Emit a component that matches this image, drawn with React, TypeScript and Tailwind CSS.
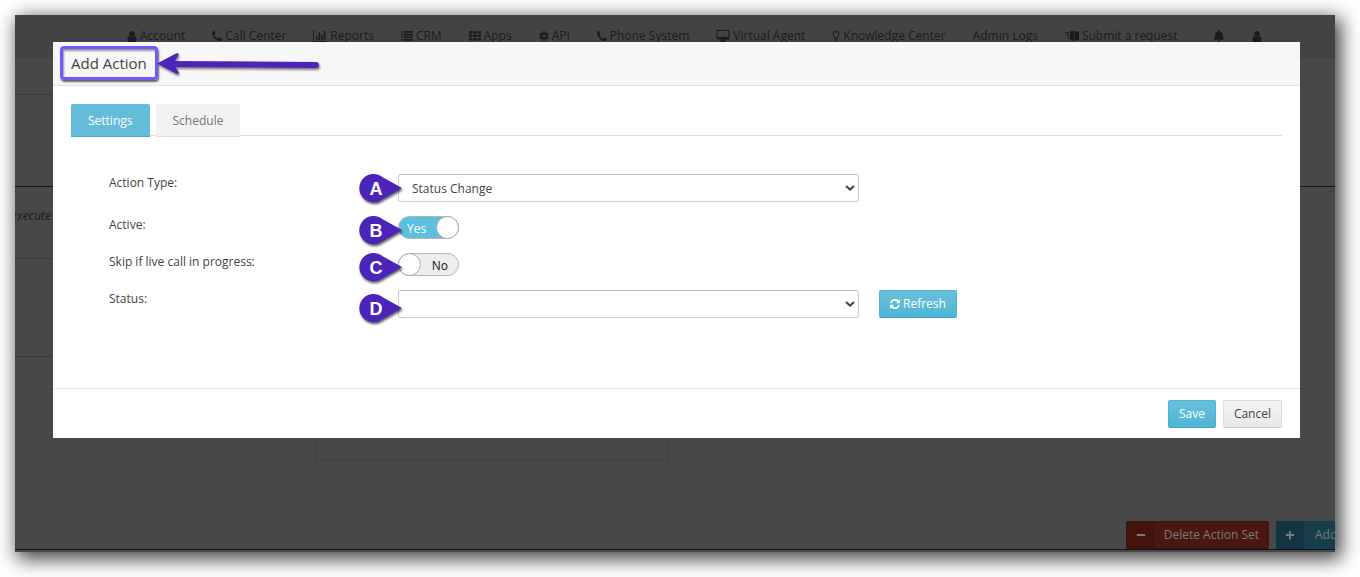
import React, { useState } from 'react'
import { FaCog, FaBell, FaMinus, FaPlus } from 'react-icons/fa'
import { clsx } from 'clsx'

interface IconProps {
  className?: string
}

const UserIcon: React.FC<IconProps> = ({ className }) => (
  <svg viewBox="0 0 1280 1536" fill="currentColor" className={className} aria-hidden="true">
    <path d="M1280 1271q0 109-62.5 187t-150.5 78h-854q-88 0-150.5-78t-62.5-187q0-85 8.5-160.5t31.5-152 58.5-131 94-89 134.5-34.5q131 128 313 128t313-128q76 0 134.5 34.5t94 89 58.5 131 31.5 152 8.5 160.5zm-256-887q0 159-112.5 271.5t-271.5 112.5-271.5-112.5-112.5-271.5 112.5-271.5 271.5-112.5 271.5 112.5 112.5 271.5z" />
  </svg>
)

const PhoneIcon: React.FC<IconProps> = ({ className }) => (
  <svg viewBox="0 128 1408 1408" fill="currentColor" className={className} aria-hidden="true">
    <path d="M1408 1240q0 27-10 70.5t-21 68.5q-21 50-122 106-94 51-186 51-27 0-53-3.5t-57.5-12.5-47-14.5-55.5-20.5-49-18q-98-35-175-83-127-79-264-216t-216-264q-48-77-83-175-3-9-18-49t-20.5-55.5-14.5-47-12.5-57.5-3.5-53q0-92 51-186 56-101 106-122 25-11 68.5-21t70.5-10q14 0 21 3 18 6 53 76 11 19 30 54t35 63.5 31 53.5q3 4 17.5 25t21.5 35.5 7 28.5q0 20-28.5 50t-62 55-62 53-28.5 46q0 9 5 22.5t8.5 20.5 14 24 11.5 19q76 137 174 235t235 174q2 1 19 11.5t24 14 20.5 8.5 22.5 5q18 0 46-28.5t53-62 55-62 50-28.5q14 0 28.5 7t35.5 21.5 25 17.5q25 15 53.5 31t63.5 35 54 30q70 35 76 53 3 7 3 21z" />
  </svg>
)

const RefreshIcon: React.FC<IconProps> = ({ className }) => (
  <svg viewBox="0 0 1536 1536" fill="currentColor" className={className} aria-hidden="true">
    <path d="M1511 928q0 5-1 7-64 268-268 434.5t-478 166.5q-146 0-282.5-55t-243.5-157l-129 129q-19 19-45 19t-45-19-19-45v-448q0-26 19-45t45-19h448q26 0 45 19t19 45-19 45l-137 137q71 66 161 102t187 36q134 0 250-65t186-179q11-17 53-117 8-23 30-23h192q13 0 22.5 9.5t9.5 22.5zm25-800v448q0 26-19 45t-45 19h-448q-26 0-45-19t-19-45 19-45l138-138q-148-137-349-137-134 0-250 65t-186 179q-11 17-53 117-8 23-30 23h-199q-13 0-22.5-9.5t-9.5-22.5v-7q65-268 270-434.5t480-166.5q146 0 284 55.5t245 156.5l130-129q19-19 45-19t45 19 19 45z" />
  </svg>
)

const ListIcon: React.FC<IconProps> = ({ className }) => (
  <svg viewBox="0 0 12 12" fill="currentColor" className={className} aria-hidden="true">
    <path d="M0 1h1.600v1.700H0zM2.500 1H12v1.700H2.500zM0 3.700h1.600v1.700H0zM2.500 3.700H12v1.700H2.500zM0 6.400h1.600v1.700H0zM2.500 6.400H12v1.700H2.500zM0 9.100h1.600v1.700H0zM2.500 9.100H12v1.700H2.500z" />
  </svg>
)

const GridIcon: React.FC<IconProps> = ({ className }) => (
  <svg viewBox="0 0 12 12" fill="currentColor" className={className} aria-hidden="true">
    <path d="M0 1h3.400v2.600H0zM4.300 1h3.400v2.600H4.300zM8.600 1H12v2.600H8.600zM0 4.500h3.400v2.600H0zM4.300 4.500h3.400v2.600H4.300zM8.600 4.500H12v2.600H8.600zM0 8h3.400v2.600H0zM4.300 8h3.400v2.600H4.300zM8.600 8H12v2.600H8.600z" />
  </svg>
)

const ChartIcon: React.FC<IconProps> = ({ className }) => (
  <svg viewBox="0 0 14 12" fill="currentColor" className={className} aria-hidden="true">
    <path d="M0 0h1v11h13v1H0zM3 6h1.600v4H3zM5.600 2.500h1.600V10H5.600zM8.200 4.500h1.600V10H8.200zM10.800 1h1.700v9h-1.700z" />
  </svg>
)

const DesktopIcon: React.FC<IconProps> = ({ className }) => (
  <svg viewBox="0 0 13 12" fill="currentColor" className={className} aria-hidden="true">
    <path fillRule="evenodd" d="M1 0h11a1 1 0 0 1 1 1v7.500a1 1 0 0 1-1 1H8.500l.5 1.500h.5v.7h-6V11H4l.5-1.500H1a1 1 0 0 1-1-1V1a1 1 0 0 1 1-1zm0 1v6h11V1z" />
  </svg>
)

const BulbIcon: React.FC<IconProps> = ({ className }) => (
  <svg viewBox="0 0 8 12" fill="none" stroke="currentColor" className={className} aria-hidden="true">
    <path d="M2.700 8C2.700 6.500 1 5.800 1 3.800a3 3 0 0 1 6 0c0 2-1.700 2.700-1.700 4.200zM2.600 9.400h2.800M3 10.900h2M4 2.200c.9 0 1.300.4 1.500 1.200" />
  </svg>
)

const TicketIcon: React.FC<IconProps> = ({ className }) => (
  <svg viewBox="0 0 15 12" fill="currentColor" className={className} aria-hidden="true">
    <path fillRule="evenodd" d="M5.500 1H14a1 1 0 0 1 1 1v7.500a1 1 0 0 1-1 1h-4L8.700 12v-1.500H5.500zm4.200 2v3h.9V3zm0 4.200v1h.9v-1zM0 2h4.500v1.200H0zM1.500 4.700h3v1.200h-3zM2.500 7.400h2v1.200h-2z" />
  </svg>
)

const NAV_ITEMS: { label: string; icon?: React.ReactNode }[] = [
  { label: 'Account', icon: <UserIcon className="h-[11px] w-2.5" /> },
  { label: 'Call Center', icon: <PhoneIcon className="h-2.5 w-2.5" /> },
  { label: 'Reports', icon: <ChartIcon className="h-3 w-3.5" /> },
  { label: 'CRM', icon: <ListIcon className="h-3 w-3" /> },
  { label: 'Apps', icon: <GridIcon className="h-3 w-3" /> },
  { label: 'API', icon: <FaCog className="h-2.5 w-2.5" /> },
  { label: 'Phone System', icon: <PhoneIcon className="h-2.5 w-2.5" /> },
  { label: 'Virtual Agent', icon: <DesktopIcon className="h-3 w-3.5" /> },
  { label: 'Knowledge Center', icon: <BulbIcon className="h-3 w-2" /> },
  { label: 'Admin Logs' },
  { label: 'Submit a request', icon: <TicketIcon className="h-3 w-3.5" /> }
]

// the page under the dialog, in its dimmed colours
const Backdrop: React.FC = () => (
  <div className="col-start-1 row-start-1 flex min-w-0 flex-col bg-[#484848] text-[#1b1b1b]">
    <nav className="flex gap-[27px] border-b border-[#404040] bg-[#434343] pt-3 pb-3 pl-28 leading-[18px] whitespace-nowrap">
      {NAV_ITEMS.map(item => (
        <a key={item.label} href="#" className="flex items-center gap-[3px]">
          {item.icon}
          {item.label}
        </a>
      ))}
      <a href="#" aria-label="Notifications" className="flex items-center pl-2">
        <FaBell className="h-3 w-3" />
      </a>
      <a href="#" aria-label="Profile" className="flex items-center">
        <UserIcon className="h-[11px] w-2.5" />
      </a>
    </nav>
    <div className="h-[37px] w-1/2 border-b border-[#3b3b3b]" />
    <div className="h-[92px] border-b border-[#1c0d33]" />
    <div className="h-[72px] w-1/2 border-b border-[#3b3b3b] pt-5 leading-[18px] italic">
      <p className="-ml-1">execute</p>
    </div>
    <div className="h-[98px] w-1/2 border-b border-[#3b3b3b]" />
    <div className="ml-[300px] h-[103px] w-[354px] border border-t-0 border-[#3e3e3e]" />
    <div className="mt-[61px] flex justify-end gap-[7px] border-b border-[#120f22] text-[#7a7a7a]">
      <button className="flex h-7 shrink-0 items-center rounded-xs border border-[#3e120c] bg-[#4a1810]">
        <span className="flex h-full w-7 items-center justify-center bg-[#43140d]">
          <FaMinus className="h-2.5 w-2.5" />
        </span>
        <span className="px-[9px]">Delete Action Set</span>
      </button>
      <button className="flex h-7 w-[59px] shrink-0 items-center overflow-hidden rounded-l-xs bg-[#173f4b]">
        <span className="flex h-full w-7 shrink-0 items-center justify-center bg-[#123540]">
          <FaPlus className="h-2.5 w-2.5" />
        </span>
        <span className="pl-[11px]">Add</span>
      </button>
    </div>
    <div className="h-0.5" />
  </div>
)

// teardrop marker pointing at the control on its right
const Marker: React.FC<{ letter: string; low?: boolean }> = ({ letter, low }) => (
  <div className={clsx('pointer-events-none absolute -left-[39px] h-[30px] w-[44px]', low ? 'top-1' : 'top-0')}>
    <svg viewBox="0 0 44 30" className="absolute inset-0 overflow-visible drop-shadow-[1px_2px_1px_rgba(0,0,0,0.6)]" aria-hidden="true">
      <path d="M43 14 24 3.500A14.200 14.200 0 1 0 23 25.500Z" fill="#4c24b9" />
    </svg>
    <span className="relative block w-[34px] text-center font-['Liberation_Sans',sans-serif] text-lg leading-[30px] font-bold text-white">
      {letter}
    </span>
  </div>
)

interface RowProps {
  id: string
  label: string
  marker: string
  markerLow?: boolean
  children: React.ReactNode
  extra?: React.ReactNode
}

const Row: React.FC<RowProps> = ({ id, label, marker, markerLow, children, extra }) => (
  <div className="grid grid-cols-[289fr_461fr_423fr] items-start">
    <label htmlFor={id} className="leading-[18px] font-medium text-[#444]">{label}</label>
    <div className="relative">
      {children}
      <Marker letter={marker} low={markerLow} />
    </div>
    {extra}
  </div>
)

const Select: React.FC<{ id: string; options: string[] }> = ({ id, options }) => (
  <div className="relative">
    <select
      id={id}
      className="block h-7 w-full appearance-none rounded-[3px] border border-[#ccc] border-t-[#bbb] bg-white px-[13px] pt-0.5 text-[#444]"
    >
      {options.map(option => <option key={option}>{option}</option>)}
    </select>
    <svg viewBox="0 0 10 6" className="pointer-events-none absolute top-[11px] right-1 h-1.5 w-2.5" aria-hidden="true">
      <path d="M1 1l4 3.600L9 1" fill="none" stroke="#444" strokeWidth="2" />
    </svg>
  </div>
)

interface ToggleProps {
  id: string
  checked: boolean
  onChange: (checked: boolean) => void
}

const Toggle: React.FC<ToggleProps> = ({ id, checked, onChange }) => (
  <label
    className={clsx(
      'relative flex h-[23px] w-[61px] items-center rounded-full border border-[#b5b5b5] pt-0.5 leading-[18px]',
      checked ? 'bg-[#5bc0de] font-medium text-white' : 'bg-[#eee] text-[#111]'
    )}
  >
    <input
      id={id}
      type="checkbox"
      checked={checked}
      onChange={e => onChange(e.target.checked)}
      className="absolute inset-0 opacity-0"
    />
    <span className={clsx('w-full', checked ? 'pl-2 text-left' : 'pr-2.5 text-right')}>
      {checked ? 'Yes' : 'No'}
    </span>
    <span
      className={clsx(
        'absolute top-[-1px] h-[23px] w-[23px] rounded-full border border-[#aaa] bg-white',
        checked ? 'right-[-1px]' : 'left-[-1px]'
      )}
    />
  </label>
)

const PRIMARY = 'rounded-xs border border-[#4fb3d3] border-b-[#3fa3c4] bg-linear-to-b from-[#68c0da] to-[#4fb5d5] text-white'

export default function App() {
  const [tab, setTab] = useState('Settings')
  const [active, setActive] = useState(true)
  const [skip, setSkip] = useState(false)

  return (
    <div className="bg-white pt-[15px] pr-[25px] pb-[25px] pl-[15px] font-['Open_Sans',sans-serif] text-xs">
      <div className="grid grid-cols-1 overflow-hidden shadow-[4px_5px_18px_2px_rgba(0,0,0,0.75)]">
        <Backdrop />
        <div
          role="dialog"
          aria-labelledby="dialog-title"
          className="relative col-start-1 row-start-1 mt-[27px] mr-[35px] ml-[38px] self-start rounded-t-xs bg-white"
        >
          <header className="flex h-11 items-center border-b border-[#e2e2e2] bg-[#f7f7f7] px-[18px] pb-0.5">
            <div className="relative">
              <h1 id="dialog-title" className="text-[15px] leading-5 text-[#444]">Add Action</h1>
              <div className="absolute -inset-x-[11px] -inset-y-[7px] rounded-sm border-[3px] border-[#7757fa] shadow-[1px_2px_2px_rgba(0,0,0,0.6),inset_1px_2px_2px_rgba(0,0,0,0.4)]" />
              <svg
                viewBox="0 0 164 26"
                className="absolute top-[-2px] left-full ml-2.5 h-[26px] w-[164px] overflow-visible drop-shadow-[1px_2px_1px_rgba(0,0,0,0.5)]"
                aria-hidden="true"
              >
                <path d="M14 13 159 14" stroke="#4c24b9" strokeWidth="6" strokeLinecap="round" />
                <path d="M0 12.500 19 2.500Q23 1.500 21 5L16 12.500 21 20Q23 24 19 22.500Z" fill="#4c24b9" />
              </svg>
            </div>
          </header>

          <div className="px-[18px] pt-[18px] pb-[70px]">
            <div role="tablist" className="flex h-8 gap-1.5 border-b border-[#ddd]">
              {['Settings', 'Schedule'].map(name => (
                <button
                  key={name}
                  role="tab"
                  aria-selected={tab === name}
                  onClick={() => setTab(name)}
                  className={clsx(
                    'h-[33px] rounded-t-xs border-b px-[17px] pt-0.5',
                    tab === name
                      ? 'border-[#42aed0] bg-[#63bdd8] font-medium text-white'
                      : 'border-[#ddd] bg-[#f2f2f2] text-[#777]'
                  )}
                >
                  {name}
                </button>
              ))}
            </div>

            <div className="mt-[38px] flex flex-col gap-3.5 pl-[38px]">
              <Row id="action-type" label="Action Type:" marker="A">
                <Select id="action-type" options={['Status Change']} />
              </Row>
              <Row id="active" label="Active:" marker="B">
                <Toggle id="active" checked={active} onChange={setActive} />
              </Row>
              <Row id="skip-live" label="Skip if live call in progress:" marker="C">
                <Toggle id="skip-live" checked={skip} onChange={setSkip} />
              </Row>
              <Row
                id="status"
                label="Status:"
                marker="D"
                markerLow
                extra={
                  <button className={clsx('ml-5 flex h-7 items-center gap-[3px] justify-self-start px-2.5', PRIMARY)}>
                    <RefreshIcon className="h-2.5 w-2.5" />
                    Refresh
                  </button>
                }
              >
                <Select id="status" options={['']} />
              </Row>
            </div>
          </div>

          <footer className="flex justify-end gap-[7px] border-t border-[#e2e2e2] px-[18px] pt-[11px] pb-2.5">
            <button className={clsx('h-7 px-2.5 font-medium', PRIMARY)}>Save</button>
            <button className="h-7 rounded-xs border border-[#ddd] border-b-[#ccc] bg-linear-to-b from-[#f4f4f4] to-[#e8e8e8] px-2.5 text-[#444]">
              Cancel
            </button>
          </footer>
        </div>
      </div>
    </div>
  )
}
